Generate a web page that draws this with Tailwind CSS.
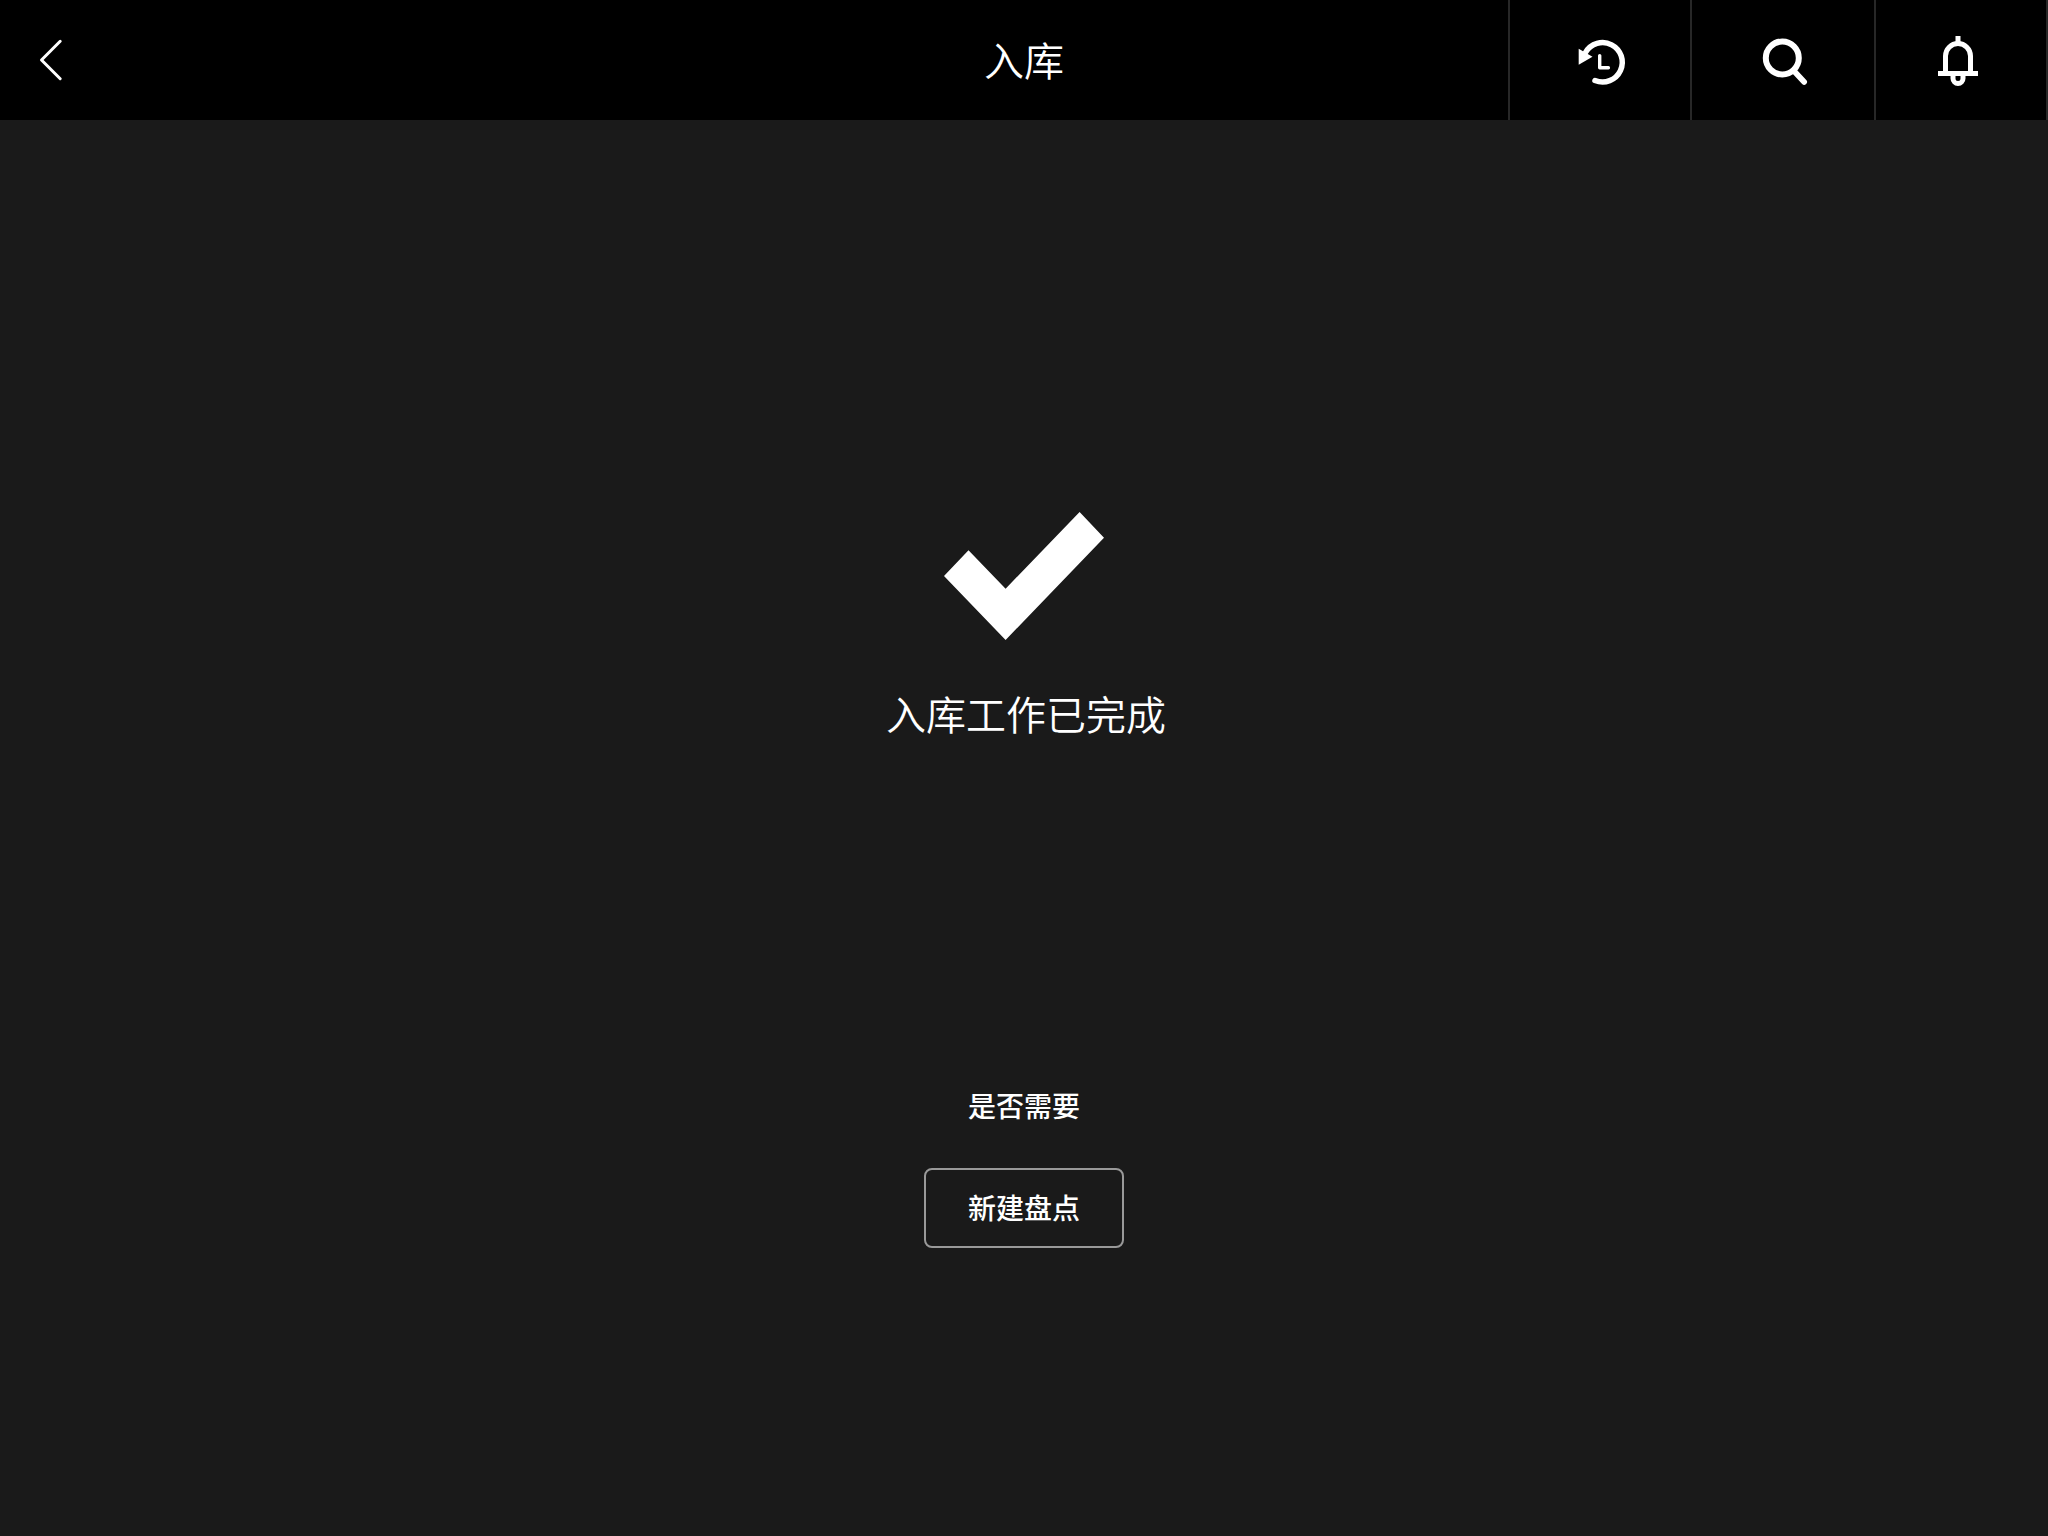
<!DOCTYPE html>
<html lang="zh-CN">
<head>
<meta charset="utf-8">
<meta name="viewport" content="width=device-width, initial-scale=1">
<title>入库</title>
<script src="https://cdn.jsdelivr.net/npm/@tailwindcss/browser@4"></script>
</head>
<body class="min-h-screen bg-[#1a1a1a] font-['Noto_Sans_CJK_SC',sans-serif] text-white">
<header class="grid h-[120px] grid-cols-[1fr_auto_1fr] bg-black">
  <button type="button" aria-label="返回" class="flex w-[100px] items-center justify-center">
    <svg class="size-[60px]" viewBox="0 0 60 60" fill="none" stroke="currentColor" stroke-width="3" stroke-linecap="round" stroke-linejoin="round"><path d="M40.200 11.300 21.500 30l18.700 18.700"/></svg>
  </button>
  <h1 class="pt-[29px] text-[40px] leading-[60px] font-[350]">入库</h1>
  <nav class="flex justify-self-end border-r-2 border-[#272727]">
    <button type="button" aria-label="历史记录" class="flex w-[182px] items-center justify-center border-l-2 border-[#272727]">
      <svg class="size-[60px]" viewBox="0 0 60 60" fill="none" stroke="currentColor" stroke-linecap="round" stroke-linejoin="round">
        <path stroke-width="5.500" d="M25 50.500A19.700 19.700 0 1 0 15.500 22.500"/>
        <path stroke-width="3.400" d="M29.700 25.600V37.800H38.400"/>
        <path fill="currentColor" stroke="none" d="M8.700 18.700 22.500 26.700 8.700 34.700Z"/>
      </svg>
    </button>
    <button type="button" aria-label="搜索" class="flex w-[184px] items-center justify-center border-l-2 border-[#272727]">
      <svg class="size-[60px]" viewBox="0 0 60 60" fill="none" stroke="currentColor" stroke-linecap="round">
        <circle cx="29.300" cy="28" r="16.500" stroke-width="6"/>
        <path stroke-width="5.600" d="M41 41 51.200 52"/>
      </svg>
    </button>
    <button type="button" aria-label="通知" class="flex w-[172px] items-center justify-center border-l-2 border-[#272727]">
      <svg class="size-[60px]" viewBox="0 0 60 60" fill="none" stroke="currentColor" stroke-width="5">
        <path d="M14.500 43V26a12.500 12.500 0 0 1 25 0V43"/>
        <path d="M27 6v7M7 43.500h40M22 44v4.500a5 5 0 0 0 10 0V44"/>
      </svg>
    </button>
  </nav>
</header>
<main class="flex flex-col items-center pt-[392px] pb-20">
  <svg class="h-32 w-40" viewBox="0 0 160 128" fill="currentColor" aria-hidden="true"><path d="M135.600 0 160 25.700 61.600 128 0 64 24.500 38.300 61.600 76.700Z"/></svg>
  <p class="mt-[43px] pl-1 text-[40px] leading-[60px] font-[350]">入库工作已完成</p>
  <p class="mt-[342px] text-[28px] leading-[40px] font-medium">是否需要</p>
  <button type="button" class="mt-[43px] h-20 w-[200px] rounded-lg border-2 border-[#999] pb-0.5 text-[28px] leading-[40px] font-medium">新建盘点</button>
</main>
</body>
</html>
